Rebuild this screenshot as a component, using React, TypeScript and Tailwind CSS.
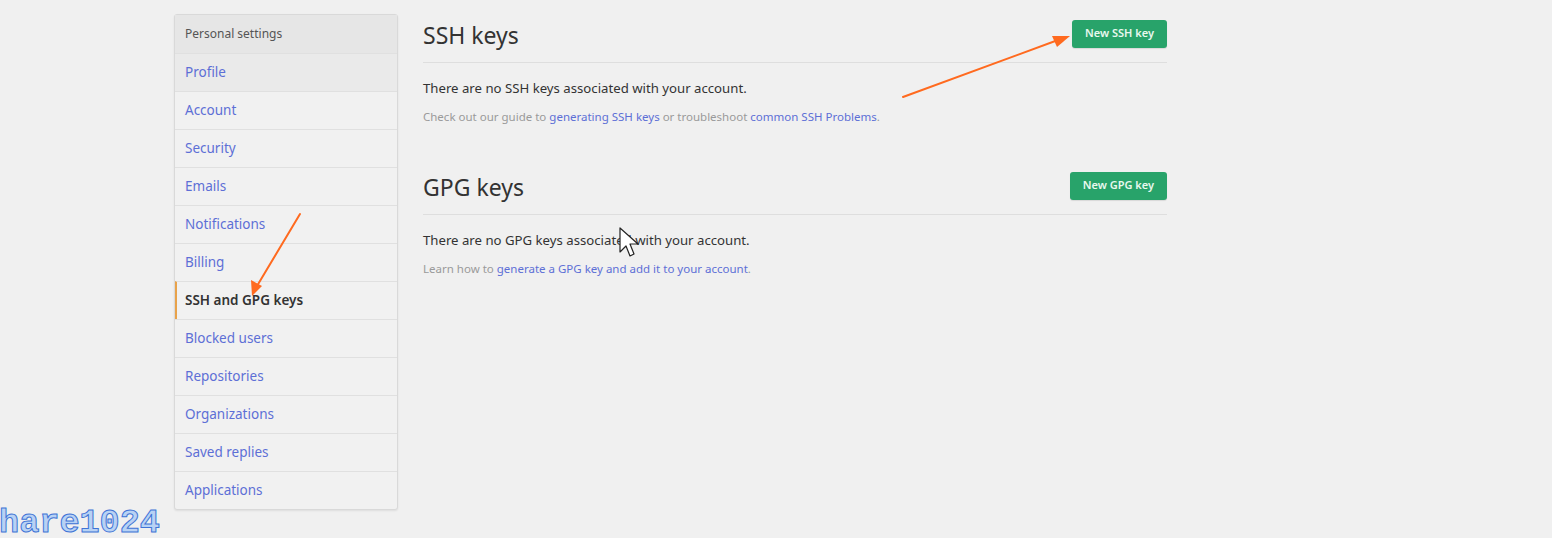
import React from 'react';

// itens do menu lateral
const menuItems = [
  'Profile',
  'Account',
  'Security',
  'Emails',
  'Notifications',
  'Billing',
  'SSH and GPG keys',
  'Blocked users',
  'Repositories',
  'Organizations',
  'Saved replies',
  'Applications',
];

const linkColor = 'text-[#5d6fd6]';

function Sidebar() {
  return (
    <nav className="w-[224px] shrink-0 rounded-[3px] border border-[#d9d9d9] bg-[#f1f1f1] shadow-[0_1px_2px_rgba(0,0,0,0.08)]">
      <div className="flex h-[38px] items-center bg-[#e6e6e6] px-[10px] text-[12px] text-[#555]">Personal settings</div>
      {menuItems.map((item, i) => {
        const selected = item === 'SSH and GPG keys';
        return (
          <div
            key={item}
            className={`flex h-[38px] items-center border-t border-[#e0e0e0] px-[10px] text-[13.5px] ${
              i === 0 ? 'bg-[#eaeaea]' : ''
            } ${selected ? 'border-l-[2px] border-l-[#e8a24a] pl-[8px] font-semibold text-[#333]' : linkColor}`}
          >
            {item}
          </div>
        );
      })}
    </nav>
  );
}

function GreenButton({ label }: { label: string }) {
  return (
    <button className="h-[28px] rounded-[3px] bg-[#28a36a] px-[13px] text-[11px] font-semibold text-[#e8f8ee] shadow-[0_1px_1px_rgba(0,0,0,0.1)]">
      {label}
    </button>
  );
}

function Section({
  title,
  button,
  text,
  children,
  className,
}: {
  title: string;
  button: string;
  text: string;
  children: React.ReactNode;
  className?: string;
}) {
  return (
    <section className={className}>
      <div className="flex items-center justify-between border-b border-[#dedede] pb-[13px]">
        <h2 className="pt-[3px] text-[23px] leading-[28px] text-[#333]">{title}</h2>
        <GreenButton label={button} />
      </div>
      <p className="mt-[15px] text-[13.2px] leading-[20px] text-[#333]">{text}</p>
      <p className="mt-[10px] text-[11.5px] leading-[18px] text-[#9a9a9a]">{children}</p>
    </section>
  );
}

export default function App() {
  return (
    <div className="relative h-[538px] w-[1552px] overflow-hidden bg-[#f0f0f0] font-['Noto_Sans',sans-serif]">
      <div className="ml-[174px] flex gap-[25px] pt-[14px]">
        <Sidebar />
        <main className="w-[744px] pt-[4px]">
          <Section title="SSH keys" button="New SSH key" text="There are no SSH keys associated with your account.">
            Check out our guide to <span className={linkColor}>generating SSH keys</span> or troubleshoot{' '}
            <span className={linkColor}>common SSH Problems</span>.
          </Section>
          <Section
            className="mt-[44px]"
            title="GPG keys"
            button="New GPG key"
            text="There are no GPG keys associated with your account."
          >
            Learn how to <span className={linkColor}>generate a GPG key and add it to your account</span>.
          </Section>
        </main>
      </div>

      {/* setas de anotação */}
      <svg className="pointer-events-none absolute left-0 top-0" width="1552" height="538">
        <path d="M903 97 L1058 40" stroke="#ff6a1f" strokeWidth="2" strokeLinecap="round" />
        <path d="M1070 36 L1052 36 L1057 47 Z" fill="#ff6a1f" />
        <path d="M300 214 L257 286" stroke="#ff6a1f" strokeWidth="2" strokeLinecap="round" />
        <path d="M252 296 L251 280 L262 286 Z" fill="#ff6a1f" />
        {/* cursor */}
        <path
          d="M620 228 L620 252 L626 246 L630 256 L634 254 L630 244 L638 244 Z"
          fill="#fff"
          stroke="#222"
          strokeWidth="1.2"
          strokeLinejoin="round"
        />
      </svg>

      {/* marca d'água */}
      <div className="absolute left-[-21px] top-[507px] font-['Liberation_Mono',monospace] text-[33.5px] font-bold leading-none text-[#b8d2f4] [-webkit-text-stroke:1px_#3f74d6]">
        share1024
      </div>
    </div>
  );
}
